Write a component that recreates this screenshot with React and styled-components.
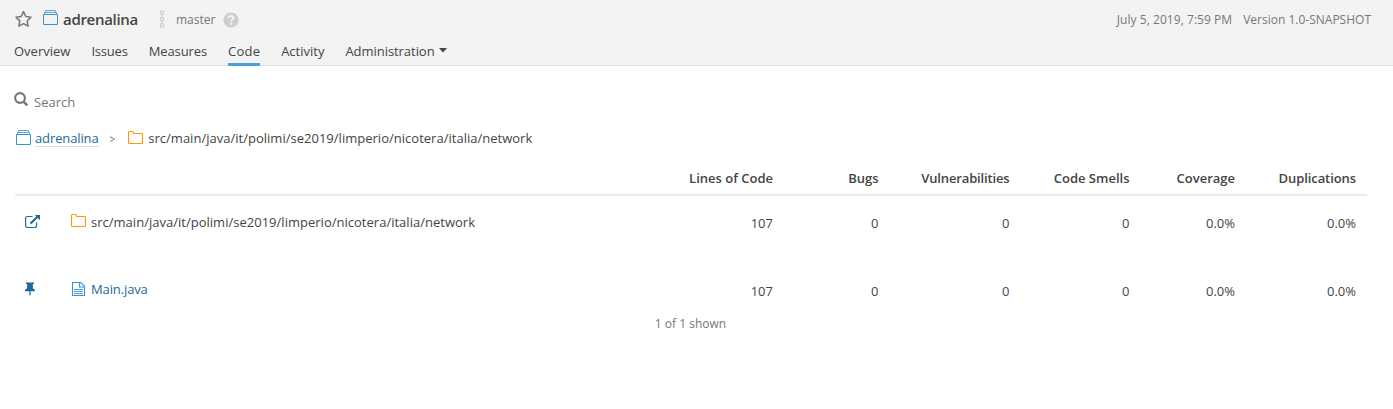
import React from "react";
import styled, { createGlobalStyle } from "styled-components";

const Global = createGlobalStyle`
  * { box-sizing: border-box; }
  body {
    margin: 0;
    background: #fff;
    color: #444;
    font-family: "Open Sans", "Noto Sans", sans-serif;
    font-size: 13px;
    line-height: 20px;
  }
`;

const Header = styled.header`
  height: 66px;
  background: #f3f3f3;
  border-bottom: 1px solid #e1e1e1;
  padding: 0 22px 0 14px;
`;
const TitleBar = styled.div`
  display: flex;
  align-items: center;
  height: 38px;
`;
const Icon = styled.svg`
  display: block;
  flex: none;
  width: ${(p) => p.$w || 16}px;
  height: ${(p) => p.$h || 16}px;
  margin: ${(p) => p.$m || "0"};
`;
const Label = styled.span`
  white-space: pre;
  font-size: ${(p) => p.$size || 13}px;
  font-weight: ${(p) => p.$weight || 400};
  letter-spacing: ${(p) => p.$ls || 0}px;
  color: ${(p) => p.$color || "#444"};
  margin: ${(p) => p.$m || "0"};
`;
const Meta = styled.div`
  margin-left: auto;
  display: flex;
  gap: 11px;
`;
const Tabs = styled.nav`
  display: flex;
  gap: 21px;
  height: 28px;
`;
const Tab = styled.a`
  display: flex;
  height: 28px;
  padding-top: 3px;
  border-bottom: 3px solid ${(p) => (p.$active ? "#4b9fd5" : "transparent")};
`;
const Content = styled.main`
  padding: 26px 26px 0 15px;
`;
const Search = styled.div`
  display: flex;
  height: 20px;
`;
const Crumbs = styled.div`
  display: flex;
  align-items: center;
  height: 20px;
  margin-top: 16px;
`;
const CrumbLink = styled.a`
  height: 18px;
  line-height: 18px;
  border-bottom: 1px solid #cae3f2;
`;
const Grid = styled.div`
  display: grid;
  grid-template-columns: 56px 1fr 100px 105.5px 131px 120px 105.5px 121px;
  padding-right: 11px;
  align-items: center;
`;
const HeadRow = styled(Grid)`
  height: 48px;
  padding-top: 14px;
  border-bottom: 2px solid #ebebeb;
`;
const Row = styled(Grid)`
  height: ${(p) => p.$h}px;
  padding-top: ${(p) => p.$top || 0}px;
`;
const NameCell = styled.div`
  display: flex;
  align-items: center;
`;
const NumberCell = styled.div`
  text-align: right;
  padding-top: ${(p) => p.$drop}px;
`;
const HeadCell = styled.div`
  text-align: right;
  white-space: nowrap;
`;
const Spacer = styled.div`
  grid-column: span 2;
`;
const Footer = styled.div`
  text-align: center;
  padding-right: 1px;
`;

const ProjectIcon = (p) => (
  <Icon viewBox="0 0 16 16" {...p}>
    <path fill="none" stroke="#3a93cc" d="M1.500 4.500h14v10h-14z" />
    <path fill="none" stroke="#4b9fd5" strokeWidth=".9" d="M2.500 4V2.500h12V4M3.500 2.500V.500h10v2" />
  </Icon>
);
const FolderIcon = (p) => (
  <Icon viewBox="0 0 16 16" {...p}>
    <path fill="none" stroke="#f90" strokeWidth="1.1" d="M1.500 2.500q0-1 1-1h3q1 0 1 1v.500q0 .500.500.500h7.500q1 0 1 1v8q0 1-1 1h-12q-1 0-1-1z" />
  </Icon>
);
const FileIcon = (p) => (
  <Icon viewBox="0 0 16 16" {...p}>
    <path fill="none" stroke="#3a93cc" strokeWidth="1.1" d="M1.500 1.500h8.300l3.700 3.700v9.300h-12zM8.500 1.500v4.500h5" />
    <path fill="none" stroke="#4b9fd5" d="M3 8.500h9M3 10.500h9M3 12.500h9" />
  </Icon>
);
const StarIcon = (p) => (
  <Icon viewBox="0 0 18 18" $w={18} $h={18} {...p}>
    <path fill="none" stroke="#777" strokeWidth="1.500" strokeLinejoin="round" d="M9.500 1.500l2.300 5 5.200.7-3.800 3.700.9 5.300-4.600-2.500-4.600 2.500.9-5.300L2 7.200l5.200-.7z" />
  </Icon>
);
const BranchIcon = (p) => (
  <Icon viewBox="0 0 8 18" $w={8} $h={18} {...p}>
    <g fill="none" stroke="#cdcdcd" strokeWidth="1.200">
      <circle cx="4" cy="2.600" r="1.700" />
      <circle cx="4" cy="9" r="1.700" />
      <circle cx="4" cy="15.400" r="1.700" />
      <path d="M4 4.200v3.200M4 10.600v3.200" />
    </g>
  </Icon>
);
const HelpIcon = (p) => (
  <Icon viewBox="0 0 16 16" {...p}>
    <circle cx="8" cy="8" r="7.600" fill="#cdcdcd" />
    <path fill="none" stroke="#f3f3f3" strokeWidth="2" d="M5.400 6q.3-2 2.600-2 2.600 0 2.600 2 0 1-1.300 1.700Q8 8.400 8 9.500M8 10.700v2" />
  </Icon>
);
const SearchIcon = (p) => (
  <Icon viewBox="0 0 16 16" {...p}>
    <circle cx="6" cy="6" r="4.900" fill="none" stroke="#777" strokeWidth="2.100" />
    <path stroke="#777" strokeWidth="2.500" d="M9.300 9.300L13.300 13.300" />
  </Icon>
);
const OpenIcon = (p) => (
  <Icon viewBox="0 0 16 16" {...p}>
    <path fill="none" stroke="#236a97" strokeWidth="1.200" d="M8.500 2.500H3.500q-1.900 0-1.900 1.900v7.200q0 1.900 1.900 1.900h7.200q1.900 0 1.900-1.900V8.500" />
    <path fill="none" stroke="#236a97" strokeWidth="2.200" d="M6.500 9.500L13.500 2.700" />
    <path fill="#236a97" d="M10.800 1H16.300V6.500z" />
  </Icon>
);
const PinIcon = (p) => (
  <Icon viewBox="0 0 16 16" {...p}>
    <path fill="#236a97" d="M4 1.500h8v1.600h-1.100v4.200l2 1.500v1.400H8.600v4.300H7.400v-4.300H3V8.800l2.100-1.500V3.100H4z" />
  </Icon>
);

const PATH = "src/main/java/it/polimi/se2019/limperio/nicotera/italia/network";

const TABS = [
  { name: "Overview" },
  { name: "Issues", ls: -0.2 },
  { name: "Measures", ls: -0.1 },
  { name: "Code", ls: 0.2, active: true },
  { name: "Activity" },
];
const COLUMNS = [
  { name: "Lines of Code" },
  { name: "Bugs" },
  { name: "Vulnerabilities", ls: -0.15 },
  { name: "Code Smells" },
  { name: "Coverage" },
  { name: "Duplications", ls: -0.08 },
];
const MEASURES = ["107", "0", "0", "0", "0.0%", "0.0%"];

const Numbers = ({ values, drop }) =>
  values.map((v, i) => (
    <NumberCell key={i} $drop={drop}>
      <Label>{v}</Label>
    </NumberCell>
  ));

export default function App() {
  return (
    <>
      <Global />
      <Header>
        <TitleBar>
          <StarIcon />
          <ProjectIcon $m="0 5px 2px 10px" />
          <Label $size={15} $weight={600} $ls={-0.3}>adrenalina</Label>
          <BranchIcon $m="0 10px 0 20px" />
          <Label $size={12} $color="#777" $m="2px 0 0">master</Label>
          <HelpIcon $m="1px 0 0 8px" />
          <Meta>
            <Label $size={12} $color="#777" $m="1px 0 0" $ls={0.05}>July 5, 2019, 7:59 PM</Label>
            <Label $size={12} $color="#777" $m="1px 0 0">Version 1.0-SNAPSHOT</Label>
          </Meta>
        </TitleBar>
        <Tabs>
          {TABS.map((t) => (
            <Tab key={t.name} $active={t.active}><Label $ls={t.ls}>{t.name}</Label></Tab>
          ))}
          <Tab>
            <Label $ls={-0.05}>Administration</Label>
            <Icon $w={8} $h={5} $m="7px 0 0 4px" viewBox="0 0 8 5">
              <path fill="#444" d="M0 0h8L4 4.500z" />
            </Icon>
          </Tab>
        </Tabs>
      </Header>
      <Content>
        <Search>
          <SearchIcon $m="0 1px 0 -1px" />
          <Label $color="#777" $m="0 0 0 3px">Search</Label>
        </Search>
        <Crumbs>
          <ProjectIcon $m="0 4px 0 0" />
          <CrumbLink><Label $color="#236a97" $ls={-0.12}>adrenalina</Label></CrumbLink>
          <Label $size={10} $color="#666" $m="1px 13px 0 11px">&gt;</Label>
          <FolderIcon $m="0 5px 0 -1px" />
          <Label $ls={0.015}>{PATH}</Label>
        </Crumbs>
        <HeadRow>
          <Spacer />
          {COLUMNS.map((c) => (
            <HeadCell key={c.name}><Label $weight={600} $ls={c.ls}>{c.name}</Label></HeadCell>
          ))}
        </HeadRow>
        <Row $h={52}>
          <OpenIcon $m="0 0 0 9px" />
          <NameCell><FolderIcon $m="0 5px 2px -1px" /><Label $ls={0.015}>{PATH}</Label></NameCell>
          <Numbers values={MEASURES} drop={2} />
        </Row>
        <Row $h={65} $top={17}>
          <PinIcon $m="0 0 0 7px" />
          <NameCell><FileIcon $m="0 4px 0 0" /><Label $color="#236a97" $ls={-0.12}>Main.java</Label></NameCell>
          <Numbers values={MEASURES} drop={4} />
        </Row>
        <Footer><Label $size={12} $color="#777">1 of 1 shown</Label></Footer>
      </Content>
    </>
  );
}
